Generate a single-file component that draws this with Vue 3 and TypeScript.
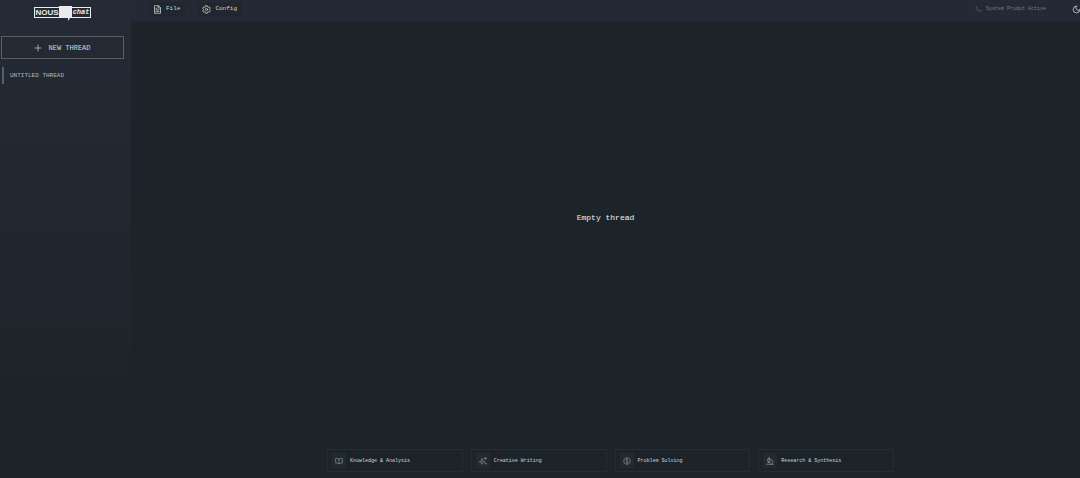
<script setup lang="ts">
interface Prompt {
  label: string
  paths: string[]
}

const threads: string[] = ['UNTITLED THREAD']

const prompts: Prompt[] = [
  {
    label: 'Knowledge & Analysis',
    paths: ['M12 7v14', 'M12 7C11 4.500 9 4 2 4v14c7 0 9 .5 10 3 1-2.500 3-3 10-3V4c-7 0-9 .5-10 3z'],
  },
  {
    label: 'Creative Writing',
    paths: ['M9 6l2 6 6 2-6 2-2 6-2-6-6-2 6-2z', 'M19 1v7', 'M15 4h8', 'M20 18v3', 'M18 20h4'],
  },
  {
    label: 'Problem Solving',
    paths: [
      'M12 4a4 4 0 0 0-7 2 5 5 0 0 0-2 6 5 5 0 0 0 3 7 4 4 0 0 0 6 2',
      'M12 4a4 4 0 0 1 7 2 5 5 0 0 1 2 6 5 5 0 0 1-3 7 4 4 0 0 1-6 2',
      'M12 4v17',
      'M9 9h3',
      'M12 15h3',
    ],
  },
  {
    label: 'Research & Synthesis',
    paths: ['M2 22h20', 'M5 17h8', 'M14 22a7 7 0 0 0 0-14h-1', 'M6 6h6v7H6z', 'M8 6V2h3v4', 'M9 13v4'],
  },
]
</script>

<template>
  <div class="app">
    <aside class="sidebar">
      <a class="logo" href="#" aria-label="Nous chat">
        <span class="logo-name">NOUS</span>
        <svg class="logo-bubble" viewBox="0 0 13 15" aria-hidden="true">
          <path d="M0 0h13v12h-2l-2 3v-3H0z" />
        </svg>
        <span class="logo-chat">chat</span>
      </a>
      <button class="new-thread" type="button">
        <svg class="icon" viewBox="0 0 24 24" aria-hidden="true"><path d="M3 12h18M12 3v18" /></svg>
        <span>NEW THREAD</span>
      </button>
      <nav class="threads" aria-label="Threads">
        <a v-for="thread in threads" :key="thread" class="thread" href="#">{{ thread }}</a>
      </nav>
    </aside>

    <div class="content">
      <header class="topbar">
        <button class="menu" type="button">
          <svg class="icon menu-icon" viewBox="0 0 24 24" aria-hidden="true">
            <path d="M14 2H4v20h16V8z" /><path d="M14 2v6h6" /><path d="M8 9h2M8 13h8M8 17h8" />
          </svg>
          <span>File</span>
        </button>
        <button class="menu" type="button">
          <svg class="icon menu-icon" viewBox="0 0 24 24" aria-hidden="true">
            <path d="M10 2h4l1 3 2 1 3-1 2 4-2 2v2l2 2-2 4-3-1-2 1-1 3h-4l-1-3-2-1-3 1-2-4 2-2v-2L2 9l2-4 3 1 2-1z" />
            <circle cx="12" cy="12" r="3" />
          </svg>
          <span>Config</span>
        </button>
        <div class="status">
          <svg class="icon status-icon" viewBox="0 0 24 24" aria-hidden="true"><path d="M3 4l6 7-6 7M12 20h10" /></svg>
          <span>System Prompt Active</span>
        </div>
        <button class="theme" type="button" aria-label="Dark theme">
          <svg class="icon theme-icon" viewBox="0 0 24 24" aria-hidden="true">
            <path d="M12 3a6 6 0 0 0 9 9 9 9 0 1 1-9-9z" />
          </svg>
        </button>
      </header>

      <main class="main">
        <div class="empty"><h1 class="empty-title">Empty thread</h1></div>
        <div class="prompts">
          <button v-for="prompt in prompts" :key="prompt.label" class="prompt" type="button">
            <span class="prompt-badge">
              <svg class="icon prompt-icon" viewBox="0 0 24 24" aria-hidden="true">
                <path v-for="d in prompt.paths" :key="d" :d="d" />
              </svg>
            </span>
            <span>{{ prompt.label }}</span>
          </button>
        </div>
      </main>
    </div>
  </div>
</template>

<style>
body {
  background: #1d2429;
}
</style>

<style scoped>
.app {
  display: flex;
  min-height: 100vh;
  background: #1d2429;
  color: #d2d6d6;
  font-family: "Liberation Mono", "Courier New", monospace;
}

button {
  padding: 0;
  border: 0;
  background: none;
  color: inherit;
  font-family: inherit;
}

a {
  color: inherit;
  text-decoration: none;
}

.icon {
  flex: none;
  width: 8px;
  height: 8px;
  fill: none;
  stroke: currentColor;
  stroke-width: 2;
  stroke-linecap: round;
  stroke-linejoin: round;
}

.sidebar {
  box-sizing: border-box;
  flex: none;
  display: flex;
  flex-direction: column;
  width: 131px;
  padding: 6px 7px 0 1px;
  background: linear-gradient(#242b36 0, #222933 110px, #1d2429 390px);
}

.logo {
  display: flex;
  align-items: flex-start;
  align-self: center;
  height: 15px;
  margin-bottom: 15px;
  color: #e8eaec;
}

.logo-name,
.logo-chat {
  box-sizing: border-box;
  height: 11px;
  margin-top: 1px;
  border: 1px solid #e8eaec;
}

.logo-name {
  padding-left: 1px;
  border-right: 0;
  font: bold 8px/9px "Liberation Sans", Arial, sans-serif;
}

.logo-chat {
  padding: 0 1px;
  border-left: 0;
  font-size: 7px;
  font-style: italic;
  font-weight: bold;
  line-height: 9px;
}

.logo-bubble {
  width: 13px;
  height: 15px;
  fill: #e8eaec;
}

.new-thread {
  display: flex;
  align-items: center;
  justify-content: center;
  gap: 6px;
  height: 23px;
  border: 1px solid #59605f;
  font-size: 7px;
  line-height: 10px;
}

.threads {
  display: flex;
  flex-direction: column;
  margin-top: 8px;
}

.thread {
  margin-left: 1px;
  padding-left: 6px;
  border-left: 2px solid #59605f;
  color: #b2b8b8;
  font-size: 6px;
  line-height: 17px;
}

.content {
  flex: 1;
  display: flex;
  flex-direction: column;
  min-width: 0;
}

.topbar {
  display: flex;
  align-items: flex-start;
  gap: 12px;
  height: 21px;
  padding-left: 17px;
  overflow: hidden;
  background: #232a35;
}

.menu {
  display: flex;
  align-items: center;
  gap: 4px;
  height: 14px;
  margin-top: 2px;
  padding: 0 5px;
  background: #20272f;
  font-size: 6px;
  line-height: 14px;
}

.menu-icon {
  width: 9px;
  height: 9px;
}

.status {
  display: flex;
  align-items: center;
  gap: 4px;
  height: 17px;
  margin-left: auto;
  color: #757c80;
  font-size: 5px;
}

.status-icon {
  width: 7px;
  height: 7px;
}

.theme {
  display: flex;
  align-items: center;
  height: 18px;
  margin-left: 14px;
  margin-right: -1px;
}

.theme-icon {
  width: 9px;
  height: 9px;
}

.main {
  flex: 1;
  display: flex;
  flex-direction: column;
  padding-bottom: 6px;
}

.empty {
  flex: 1;
  display: flex;
  align-items: center;
  justify-content: center;
  padding-bottom: 34px;
}

.empty-title {
  margin: 0;
  color: #f0f2f2;
  font-size: 8px;
  font-weight: normal;
  line-height: 12px;
}

.prompts {
  display: grid;
  grid-template-columns: repeat(4, 1fr);
  gap: 8px;
  box-sizing: border-box;
  width: 100%;
  max-width: 577px;
  margin: 0 auto;
  padding-left: 10px;
}

.prompt {
  display: flex;
  align-items: center;
  gap: 4px;
  height: 23px;
  padding: 0 4px;
  border: 1px solid #242c34;
  color: #ced2d3;
  font-size: 5px;
  line-height: 8px;
  white-space: nowrap;
}

.prompt-badge {
  display: flex;
  align-items: center;
  justify-content: center;
  width: 14px;
  height: 15px;
  background: #222931;
  color: #8c9494;
}
</style>
